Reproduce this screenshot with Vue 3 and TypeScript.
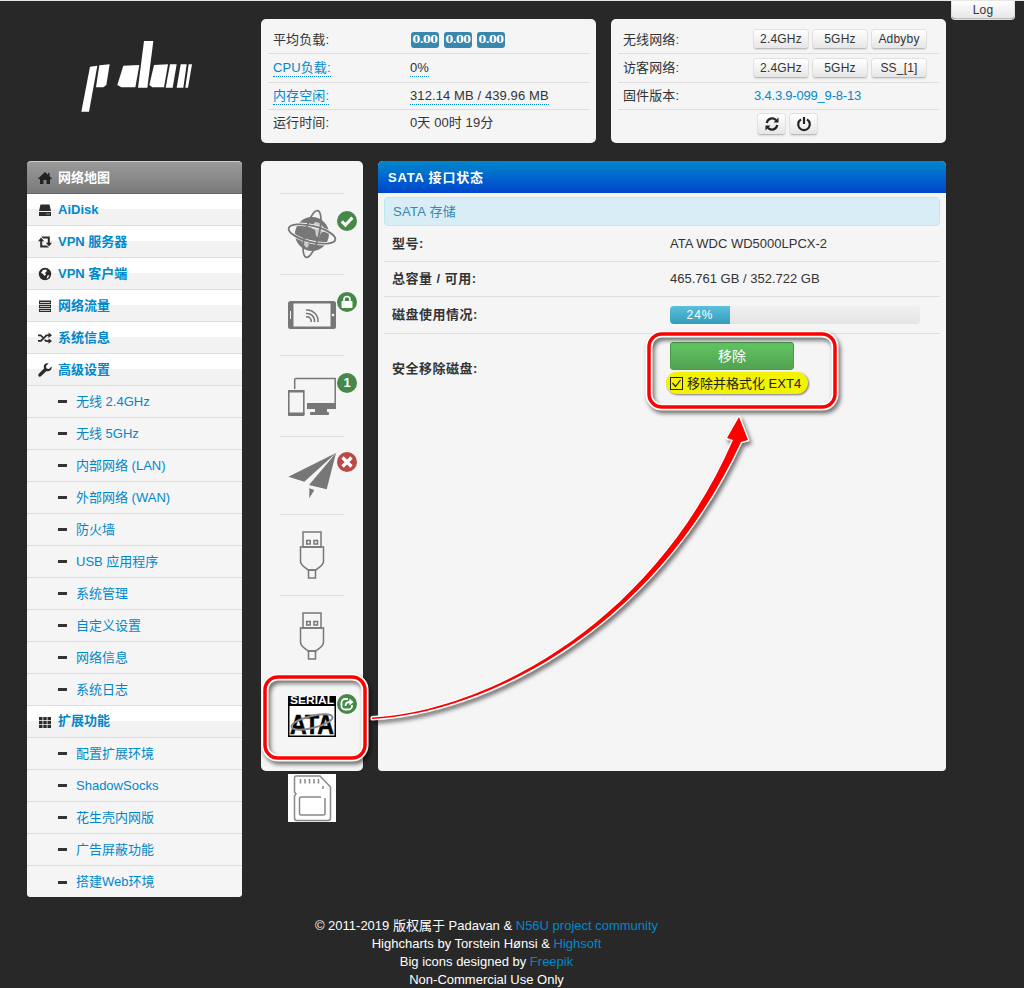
<template>
  <div class="page">
    <div class="top">
      <div class="logo">
        <svg width="135" height="80" viewBox="0 0 405 240">
          <polygon v-for="(p, i) in logoShapes" :key="i" :points="p" fill="#fff" />
        </svg>
      </div>
      <div class="card">
        <div class="row" v-for="s in statusRows" :key="s.label">
          <span :class="{ dotted: s.link }">{{ s.label }}</span>
          <span v-if="s.badges" class="badges"><b v-for="(b, i) in s.badges" :key="i">{{ b }}</b></span>
          <span v-else :class="{ 'dotted-plain': s.dotted }">{{ s.value }}</span>
        </div>
      </div>
      <div class="card right">
        <div class="row" v-for="w in wifiRows" :key="w.label">
          <span>{{ w.label }}</span>
          <span class="btns"><button v-for="b in w.btns" :key="b" class="btn">{{ b }}</button></span>
        </div>
        <div class="row">
          <span>固件版本:</span>
          <a class="link">3.4.3.9-099_9-8-13</a>
        </div>
        <div class="row last">
          <button class="btn square">
            <svg width="16" height="16" viewBox="0 0 16 16" fill="none" stroke="#222" stroke-width="2.2">
              <path d="M2.8 7A5.3 5.3 0 0 1 12 4.2" />
              <path d="M13.2 9A5.3 5.3 0 0 1 4 11.8" />
              <path d="M14.5 1.5V6.5H9.5Z M1.5 14.5V9.5H6.5Z" fill="#222" stroke="none" />
            </svg>
          </button>
          <button class="btn square">
            <svg width="16" height="16" viewBox="0 0 16 16" fill="none" stroke="#222" stroke-width="2.2">
              <path d="M5 3.4A5.8 5.8 0 1 0 11 3.4" />
              <path d="M8 1V8" />
            </svg>
          </button>
        </div>
      </div>
      <button class="btn log">Log</button>
    </div>

    <div class="main">
      <div class="sidebar">
        <div class="nav-active">
          <svg class="ico" viewBox="0 0 14 14"><path :d="navIcons.home" fill="#222" fill-rule="evenodd" /></svg>
          网络地图
        </div>
        <template v-for="n in navItems" :key="n.text">
          <div v-if="n.icon" class="nav-head">
            <svg class="ico" viewBox="0 0 14 14"><path :d="navIcons[n.icon]" fill="#2b2b2b" fill-rule="evenodd" /></svg>
            <span>{{ n.text }}</span>
          </div>
          <div v-else class="nav-sub"><i></i>{{ n.text }}</div>
        </template>
      </div>

      <div class="icons">
        <!-- globe -->
        <div class="icon-row">
          <svg class="big" viewBox="0 0 48 48">
            <circle cx="24" cy="24" r="17" fill="#777" />
            <path d="M27 12c5 0 9 4 10 9l-4 2-2 5-3-2-1-6-4-2zM13 28l5 2 3 5-2 3c-3-2-5-5-6-10z" fill="#ccc" />
            <g fill="none" stroke="#f5f5f5" stroke-width="3.4">
              <ellipse cx="24" cy="24" rx="24" ry="8" transform="rotate(14 24 24)" />
            </g>
            <g fill="none" stroke="#777" stroke-width="1.8">
              <ellipse cx="24" cy="24" rx="24" ry="8" transform="rotate(14 24 24)" />
              <ellipse cx="24" cy="24" rx="24" ry="7" transform="rotate(104 24 24)" />
            </g>
          </svg>
          <span class="dot green">
            <svg width="14" height="14" viewBox="0 0 14 14"><path d="M1.8 7.4 5.4 11 12.4 3.6" fill="none" stroke="#fff" stroke-width="3" /></svg>
          </span>
        </div>
        <!-- tablet -->
        <div class="icon-row">
          <svg class="big" viewBox="0 0 48 48">
            <rect x="0" y="10" width="48" height="28" rx="2.5" fill="#777" />
            <rect x="5.5" y="12.5" width="37" height="23" fill="#f5f5f5" />
            <path d="M18 19a11 11 0 0 1 12 12M18 22.5a7.5 7.5 0 0 1 8.500 8.500M18 26a4 4 0 0 1 5 5" fill="none" stroke="#777" stroke-width="1.5" />
            <circle cx="45" cy="24" r="1.300" fill="#f5f5f5" />
            <rect x="2" y="20" width="1" height="8" fill="#f5f5f5" />
          </svg>
          <span class="dot green">
            <svg width="14" height="14" viewBox="0 0 14 14"><path d="M4 6.500V4.500a3 3 0 0 1 6 0v2" fill="none" stroke="#fff" stroke-width="1.600" /><rect x="1.500" y="6" width="11" height="7" rx=".8" fill="#fff" /></svg>
          </span>
        </div>
        <!-- devices -->
        <div class="icon-row">
          <svg class="big" viewBox="0 0 48 48">
            <path d="M6.700 17V7.500Q6.700 6.500 8 6.500H47.200V36" fill="none" stroke="#777" stroke-width="1.500" />
            <rect x="19" y="31" width="29" height="6" fill="#777" />
            <rect x="27" y="37" width="12" height="3" fill="#777" />
            <rect x="22" y="40" width="19" height="3" rx="1" fill="#777" />
            <rect x="0.800" y="18.800" width="15" height="24.500" rx="1.500" fill="#f5f5f5" stroke="#777" stroke-width="1.600" />
            <rect x="0" y="18" width="16.500" height="2.500" fill="#777" />
            <rect x="0" y="40.500" width="16.500" height="3.500" rx="1" fill="#777" />
          </svg>
          <span class="dot green num">1</span>
        </div>
        <!-- plane -->
        <div class="icon-row short">
          <svg class="big" viewBox="0 0 48 48">
            <path d="M48 0 0.300 23.700 16.300 28.700Z M48 0 21 32 38.700 36.300Z M21.300 35.300 26.300 37 21.300 45.300Z" fill="#777" />
          </svg>
          <span class="dot red high">
            <svg width="14" height="14" viewBox="0 0 14 14"><path d="M2.500 2.500 11.500 11.500M11.500 2.500 2.500 11.500" fill="none" stroke="#fff" stroke-width="3.200" /></svg>
          </span>
        </div>
        <!-- usb x2 -->
        <div class="icon-row" v-for="u in 2" :key="u">
          <svg class="big" viewBox="0 0 48 48">
            <g fill="none" stroke="#777" stroke-width="1.500">
              <rect x="15" y="1" width="18" height="15" />
              <path d="M12.500 16H35.500V30C35.500 35 31 36 28 39H20C17 36 12.500 35 12.500 30Z" />
              <rect x="20.500" y="39" width="7" height="8" />
              <rect x="18.700" y="9.500" width="3.500" height="3.500" />
              <rect x="26" y="9.500" width="3.500" height="3.500" />
            </g>
          </svg>
        </div>
        <!-- sata -->
        <div class="icon-row">
          <svg class="big" viewBox="0 0 48 48">
            <rect x="0" y="3" width="48" height="41" fill="#000" />
            <rect x="1.500" y="13" width="45" height="29.500" fill="#fff" />
            <text class="sata-top" x="24" y="11" text-anchor="middle" textLength="44" lengthAdjust="spacingAndGlyphs">SERIAL</text>
            <text class="sata-big" x="24" y="40.500" text-anchor="middle" textLength="44" lengthAdjust="spacingAndGlyphs">ATA</text>
            <ellipse cx="24" cy="29" rx="21" ry="6" transform="rotate(-14 24 29)" fill="none" stroke="#888" stroke-width="2" />
          </svg>
          <span class="dot green">
            <svg width="16" height="16" viewBox="0 0 16 16" fill="none" stroke="#fff" stroke-width="1.800">
              <path d="M9 3H6A3.500 3.500 0 0 0 2.500 6.500V10A3.500 3.500 0 0 0 6 13.500H9.500A3.500 3.500 0 0 0 13 10V9" />
              <path d="M6.500 10C6.500 7 8.500 6 11 6" />
              <path d="M10.500 2.500 14.500 6 10.500 9.500Z" fill="#fff" stroke="none" />
            </svg>
          </span>
        </div>
        <!-- sd -->
        <div class="icon-row sd">
          <svg class="big" viewBox="0 0 48 48">
            <rect width="48" height="48" fill="#fff" />
            <g fill="none" stroke="#888" stroke-width="1.500">
              <path d="M8 2H32L42.500 13V44Q42.500 46.500 40 46.500H9Q6.500 46.500 6.500 44V22L8 20 6.500 18V4Q6.500 2 8 2Z" />
              <path d="M33 23H13Q11.500 23 11.500 25V39Q11.500 41 13 41H35.500Q37 41 37 39V24" />
              <path d="M12.500 5V9.500M17 5V9.500M21.500 5V9.500M26 5V9.500M30.500 5V9.500M35 12V15" />
            </g>
          </svg>
        </div>
      </div>

      <div class="panel">
        <div class="panel-title">SATA 接口状态</div>
        <div class="panel-body">
          <div class="alert">SATA 存储</div>
          <div class="info" v-for="r in infoRows" :key="r.label">
            <b>{{ r.label }}</b><span>{{ r.value }}</span>
          </div>
          <div class="info">
            <b>磁盘使用情况:</b>
            <div class="progress">
              <div class="bar" :style="{ width: usedPercent + '%' }">{{ usedPercent }}%</div>
            </div>
          </div>
          <div class="info eject">
            <b>安全移除磁盘:</b>
            <div class="eject-box">
              <button class="green-btn">移除</button>
              <label class="format">
                <svg width="13" height="13" viewBox="0 0 13 13">
                  <rect x=".5" y=".5" width="12" height="12" fill="#f3f300" stroke="#222" />
                  <path d="M2.500 6 5.500 9.500 10.500 3" fill="none" stroke="#222" stroke-width="1.200" />
                </svg>
                移除并格式化 EXT4
              </label>
            </div>
          </div>
        </div>
      </div>
    </div>

    <div class="footer">
      <div>© 2011-2019 版权属于 Padavan &amp; <a>N56U project community</a></div>
      <div>Highcharts by Torstein Hønsi &amp; <a>Highsoft</a></div>
      <div>Big icons designed by <a>Freepik</a></div>
      <div>Non-Commercial Use Only</div>
    </div>

    <!-- callouts drawn on top of the screenshot -->
    <svg class="overlay" width="1024" height="988" viewBox="0 0 1024 988">
      <g class="callout">
        <g fill="none" stroke="#fff" stroke-width="7">
          <rect x="265" y="677" width="100" height="81" rx="13" />
          <rect x="649" y="334" width="186" height="73" rx="13" />
        </g>
        <path :d="arrowPath" fill="#fff" stroke="#fff" stroke-width="3" stroke-linejoin="round" />
      </g>
      <g fill="none" stroke="#f00" stroke-width="3.500">
        <rect x="265" y="677" width="100" height="81" rx="13" />
        <rect x="649" y="334" width="186" height="73" rx="13" />
      </g>
      <path :d="arrowPath" fill="#f00" />
    </svg>
  </div>
</template>

<script setup lang="ts">
type StatusRow = { label: string, value?: string, badges?: string[], link?: boolean, dotted?: boolean }
type NavItem = { text: string, icon?: string }

const logoShapes = [
  '78,95 100,92 75,230 52,230',
  '106,91 137,88 127,150 118,157 96,157',
  '178,92 226,90 214,157 172,157 160,150',
  '240,18 268,18 250,158 222,158',
  '270,90 312,88 300,157 265,157 256,150',
  '318,88 338,88 326,158 305,158',
  '350,88 368,88 358,158 338,158',
  '374,88 384,88 372,158 364,158',
]

const statusRows: StatusRow[] = [
  { label: '平均负载:', badges: ['0.00', '0.00', '0.00'] },
  { label: 'CPU负载:', value: '0%', link: true, dotted: true },
  { label: '内存空闲:', value: '312.14 MB / 439.96 MB', link: true, dotted: true },
  { label: '运行时间:', value: '0天 00时 19分' },
]

const wifiRows = [
  { label: '无线网络:', btns: ['2.4GHz', '5GHz', 'Adbyby'] },
  { label: '访客网络:', btns: ['2.4GHz', '5GHz', 'SS_[1]'] },
]

const navIcons: Record<string, string> = {
  home: 'M7 1 0 7.500 1 8.500 2 7.600V13H5.500V9H8.500V13H12V7.600L13 8.500 14 7.500 11.500 5.200V2H10V3.800Z',
  hdd: 'M2.500 1.500H11.500L13 8H1ZM1 9H13V13H1ZM8.500 10.500V11.500H9.500V10.500ZM10.500 10.500V11.500H11.500V10.500Z',
  retweet: 'M3 2.500 6.200 6.200H4.200V10.500H9L10.800 12.500H2.200V6.200H0ZM11 11.500 7.800 7.800H9.800V3.500H5L3.200 1.500H11.800V7.800H14Z',
  globe: 'M7 .8A6.200 6.200 0 1 0 7 13.200 6.200 6.200 0 0 0 7 .8ZM5 3 8 2.500 9 4 7 6 8 7.500 6.500 9 5 7 3 6ZM9.500 8.500 11.500 8 10 11 8.500 11.500Z',
  tasks: 'M1 1.500H13V5H1ZM2 3V3.700H12V3ZM1 5.800H13V9H1ZM2 7.200V7.900H12V7.200ZM1 9.800H13V13H1ZM2 11.200V11.900H12V11.200Z',
  random: 'M0 3.500H3L5.500 6 4.500 7.200 2.500 5.200H0ZM0 9H2.500L8 3.500H10.500V1.500L14 4.300 10.500 7V5.200H8.800L3.300 10.700H0ZM7 8.200 8.800 9.200H10.500V7.500L14 10 10.500 12.800V11H8L6 9.200Z',
  wrench: 'M13.500 3.500 11 6 8.500 5.500 8 3 10.500.5C8.500-.2 6 1 5.800 3.500 5.700 4.300 5.900 5 6 5.500L.8 10.800C0 11.600 0 12.500.7 13.200 1.400 13.900 2.400 13.900 3.200 13.100L8.500 8C11 8.800 14.500 7 13.500 3.500Z',
  th: 'M1 2H4.500V5.200H1ZM5.300 2H8.700V5.200H5.300ZM9.500 2H13V5.200H9.500ZM1 6H4.500V9H1ZM5.300 6H8.700V9H5.300ZM9.500 6H13V9H9.500ZM1 9.800H4.500V13H1ZM5.300 9.800H8.700V13H5.300ZM9.500 9.800H13V13H9.500Z',
}

const navItems: NavItem[] = [
  { text: 'AiDisk', icon: 'hdd' },
  { text: 'VPN 服务器', icon: 'retweet' },
  { text: 'VPN 客户端', icon: 'globe' },
  { text: '网络流量', icon: 'tasks' },
  { text: '系统信息', icon: 'random' },
  { text: '高级设置', icon: 'wrench' },
  { text: '无线 2.4GHz' },
  { text: '无线 5GHz' },
  { text: '内部网络 (LAN)' },
  { text: '外部网络 (WAN)' },
  { text: '防火墙' },
  { text: 'USB 应用程序' },
  { text: '系统管理' },
  { text: '自定义设置' },
  { text: '网络信息' },
  { text: '系统日志' },
  { text: '扩展功能', icon: 'th' },
  { text: '配置扩展环境' },
  { text: 'ShadowSocks' },
  { text: '花生壳内网版' },
  { text: '广告屏蔽功能' },
  { text: '搭建Web环境' },
]

const infoRows = [
  { label: '型号:', value: 'ATA WDC WD5000LPCX-2' },
  { label: '总容量 / 可用:', value: '465.761 GB / 352.722 GB' },
]

const usedPercent = 24

const arrowPath = 'M372 717.500C480 712 650 630 733 440L727 438 739 417 748 440 741 442C652 634 480 714 372 719Z'
</script>

<style>
html, body { margin: 0; background: #282828; }
</style>

<style scoped>
.page {
  position: relative;
  width: 1024px;
  height: 988px;
  box-sizing: border-box;
  border-top: 1px solid #e8e8e8;
  background: #282828;
  overflow: hidden;
  font: 13px/18px "Liberation Sans", "Noto Sans CJK SC", sans-serif;
  color: #333;
}
a, .link { color: #0088cc; text-decoration: none; }

.top { display: flex; align-items: flex-start; padding: 18px 0 0 27px; height: 124px; }
.logo { width: 215px; height: 124px; display: flex; justify-content: center; margin-right: 19px; }
.logo svg { margin: 16px 0 0 -6px; }
.card {
  width: 335px;
  height: 124px;
  box-sizing: border-box;
  padding: 7px 7px 0;
  margin-right: 15px;
  background: #f5f5f5;
  border-radius: 5px;
}
.card .row {
  display: grid;
  grid-template-columns: 137px 1fr;
  align-items: center;
  height: 29px;
  box-sizing: border-box;
  padding-left: 5px;
  border-bottom: 1px solid #ddd;
  letter-spacing: .1px;
}
.card .row:first-child { height: 28px; }
.card .row:nth-child(3) { height: 27px; }
.card .row:last-child { border-bottom: 0; height: 33px; align-items: start; padding-top: 4px; }
.card.right .row { grid-template-columns: 131px 1fr; }
.card.right .row.last { display: flex; gap: 5px; padding-left: 140px; }
.link { letter-spacing: -.2px; }
.dotted { color: #0088cc; justify-self: start; border-bottom: 1px dotted #0088cc; line-height: 17px; }
.dotted-plain { justify-self: start; border-bottom: 1px dotted #0088cc; line-height: 17px; }
.badges { display: flex; gap: 5px; margin-left: 1px; }
.badges b {
  width: 28px;
  height: 16px;
  border-radius: 3px;
  background: #3a87ad;
  color: #fff;
  font: bold 11px/16px "DejaVu Serif", serif;
  text-align: center;
  letter-spacing: -.4px;
}
.btns { display: flex; gap: 5px; }
.btn {
  width: 54px;
  height: 19px;
  padding: 0;
  border: 0;
  border-bottom: 1px solid #bbb;
  border-radius: 3px;
  background: linear-gradient(#fff, #e6e6e6);
  box-shadow: 0 0 0 1px #e0e0e0, 0 1px 2px rgba(0, 0, 0, .1);
  color: #333;
  font: 12px/18px "Liberation Sans", sans-serif;
  letter-spacing: .2px;
}
.square { width: 27px; height: 21px; display: flex; align-items: center; justify-content: center; }
.log { width: 62px; height: 18px; margin: -18px 0 0 -9px; border-radius: 0 0 3px 3px; }

.main { display: flex; align-items: flex-start; padding: 18px 0 0 27px; }
.sidebar {
  width: 215px;
  height: 736px;
  box-sizing: border-box;
  background: #f5f5f5;
  border-top: 1px solid #ccc;
  border-radius: 4px;
  overflow: hidden;
}
.nav-active {
  display: flex;
  align-items: center;
  height: 32px;
  padding-left: 11px;
  gap: 6px;
  box-sizing: border-box;
  background: linear-gradient(#9a9a9a, #7a7a7a);
  border-bottom: 1px solid #666;
  color: #fff;
  font-weight: bold;
}
.nav-head {
  display: flex;
  align-items: center;
  height: 32px;
  box-sizing: border-box;
  padding-left: 11px;
  gap: 6px;
  background: linear-gradient(#fff 50%, #f2f2f2 50%, #f2f2f2);
  border-bottom: 1px solid #ddd;
  color: #0088cc;
  font-weight: bold;
}
.nav-sub + .nav-head span { margin-top: -2px; }
.ico { width: 14px; height: 14px; flex: none; }
.nav-sub {
  display: flex;
  align-items: center;
  height: 32px;
  box-sizing: border-box;
  padding-left: 31px;
  background: #f5f5f5;
  border-bottom: 1px solid #ddd;
  color: #0088cc;
}
.nav-sub:last-child { border-bottom: 0; }
.nav-sub i { width: 9px; height: 3px; margin-right: 9px; background: #333; flex: none; }

.icons {
  width: 102px;
  height: 610px;
  margin-left: 19px;
  padding-top: 32px;
  box-sizing: border-box;
  background: #f5f5f5;
  border-radius: 5px;
}
.icon-row {
  position: relative;
  height: 81px;
  box-sizing: border-box;
  margin: 0 19px;
  padding: 16px 0 0 8px;
  border-top: 1px solid #ddd;
}
.icon-row.short { height: 78px; }
.icon-row.sd { border-top: 0; padding-top: 17px; }
.big { display: block; width: 48px; height: 48px; overflow: visible; }
.sata-top { font: bold 10px "Liberation Sans", sans-serif; fill: #fff; }
.sata-big { font: bold 27px "Liberation Sans", sans-serif; fill: #000; stroke: #000; stroke-width: .6px; }
.dot {
  position: absolute;
  left: 57px;
  top: 17px;
  width: 20px;
  height: 20px;
  border-radius: 50%;
  display: flex;
  align-items: center;
  justify-content: center;
  color: #fff;
  font-weight: bold;
  font-size: 13px;
}
.dot.high { top: 15px; }
.green { background: #468847; }
.red { background: #b94a48; }

.panel {
  width: 568px;
  height: 610px;
  margin-left: 15px;
  background: #f5f5f5;
  border-radius: 5px 5px 4px 4px;
  overflow: hidden;
}
.panel-title {
  height: 32px;
  box-sizing: border-box;
  padding: 8px 0 0 10px;
  background: linear-gradient(#0088cc, #0044cc);
  color: #fff;
  font-weight: bold;
  letter-spacing: .8px;
}
.panel-body { padding: 4px 6px 0; }
.alert {
  height: 29px;
  box-sizing: border-box;
  padding: 5px 8px;
  background: #d9edf7;
  border: 1px solid #bce8f1;
  border-radius: 4px;
  color: #3a87ad;
  letter-spacing: .3px;
}
.info {
  display: grid;
  grid-template-columns: 286px 1fr;
  align-items: center;
  height: 35px;
  box-sizing: border-box;
  padding-left: 8px;
  border-bottom: 1px solid #ddd;
}
.info b { letter-spacing: .5px; }
.info span { margin-left: -8px; }
.info:nth-child(2) { height: 36px; }
.info:nth-child(4) { height: 37px; }
.info.eject { height: 70px; border-bottom: 0; align-items: start; }
.info.eject b { margin-top: 26px; }
.progress {
  width: 250px;
  height: 18px;
  margin-left: -8px;
  border-radius: 4px;
  background: linear-gradient(#f0f0f0, #e4e4e4);
  overflow: hidden;
}
.bar {
  height: 18px;
  background: linear-gradient(#5bc0de, #339bb9);
  color: #fff;
  font-size: 12px;
  line-height: 18px;
  text-align: center;
  letter-spacing: 1px;
}
.eject-box { display: flex; flex-direction: column; align-items: flex-start; margin: 8px 0 0 -8px; }
.green-btn {
  width: 124px;
  height: 28px;
  padding: 0 0 2px;
  border: 1px solid #4c9a4c;
  border-radius: 3px;
  background: linear-gradient(#62c462, #51a351);
  color: #fff;
  font: 14px "Liberation Sans", "Noto Sans CJK SC", sans-serif;
}
.format {
  display: flex;
  align-items: center;
  gap: 4px;
  width: 142px;
  height: 22px;
  box-sizing: border-box;
  margin: 2px 0 0 -4px;
  padding: 1px 0 0 4px;
  border-radius: 11px;
  background: #f3f300;
  box-shadow: 1px 1px 2px rgba(0, 0, 0, .5);
  color: #222;
  white-space: nowrap;
}

.footer {
  width: 919px;
  margin: 20px 0 0 27px;
  color: #fff;
  text-align: center;
}

.overlay { position: absolute; left: 0; top: -1px; pointer-events: none; }
.callout { filter: drop-shadow(2px 3px 2px rgba(0, 0, 0, .55)); }
</style>
